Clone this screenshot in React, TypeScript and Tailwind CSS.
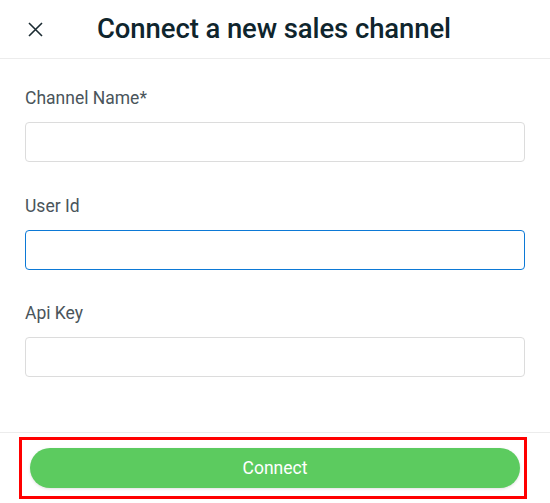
const fields = [
  { label: "Channel Name*", focused: false },
  { label: "User Id", focused: true },
  { label: "Api Key", focused: false },
];

export default function App() {
  return (
    <div className="w-[550px] h-[503px] bg-white font-['Roboto',sans-serif] flex flex-col overflow-hidden">
      {/* header */}
      <div className="h-[59px] flex items-center border-b border-[#ececec] shrink-0">
        <button className="ml-[27px] w-[16px] h-[16px] flex items-center justify-center text-[#1b2b32]">
          <svg width="15" height="15" viewBox="0 0 15 15" fill="none">
            <path d="M1 1L14 14M14 1L1 14" stroke="currentColor" strokeWidth="1.6" />
          </svg>
        </button>
        <h1 className="ml-[54px] text-[27.5px] font-medium text-[#0f252d] leading-none tracking-[-0.1px]">
          Connect a new sales channel
        </h1>
      </div>

      {/* form */}
      <div className="px-[25px] pt-[27px] flex flex-col gap-[31.5px]">
        {fields.map((f) => (
          <div key={f.label} className="flex flex-col">
            <label className="text-[17.5px] leading-[24px] text-[#4a555b]">{f.label}</label>
            <input
              type="text"
              className={
                f.focused
                  ? "mt-[12px] h-[40px] w-full rounded-[4px] border-[1.5px] border-[#0c79d6] outline-none px-3"
                  : "mt-[12px] h-[40px] w-full rounded-[4px] border border-[#dcdcdc] outline-none px-3"
              }
            />
          </div>
        ))}
      </div>

      <div className="flex-1" />

      {/* footer */}
      <div className="border-t border-[#ececec] pt-[4px] pb-[4px] shrink-0">
        <div className="ml-[19px] w-[508px] border-[3px] border-[#ff0000] pl-[8px] pr-[4px] py-[8px]">
          <button className="w-full h-[40px] rounded-full bg-[#5ccb5f] text-white text-[17.5px] shadow-[0_1px_3px_rgba(0,0,0,0.12)]">
            Connect
          </button>
        </div>
      </div>
    </div>
  );
}
